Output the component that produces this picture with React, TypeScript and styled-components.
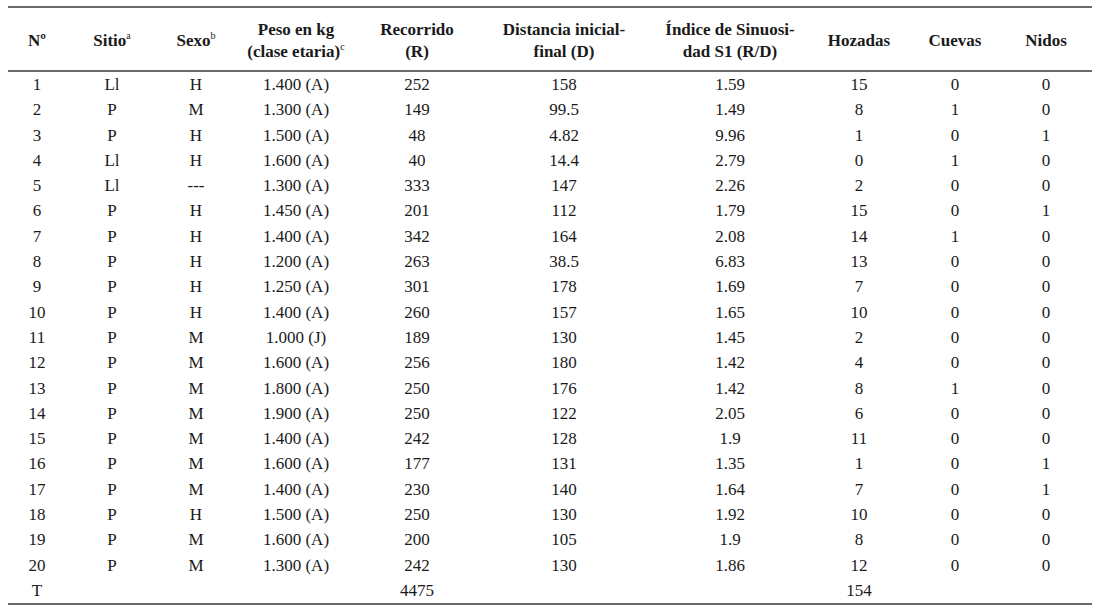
import React from 'react'
import styled, { createGlobalStyle } from 'styled-components'

const GlobalStyle = createGlobalStyle`
  body {
    margin: 0;
    background: #ffffff;
    font-family: "Liberation Serif", "Times New Roman", serif;
    color: #1a1a1a;
  }
`

const widths = [58, 92, 76, 124, 118, 176, 156, 102, 90, 92]

type Row = [string, string, string, string, string, string, string, string, string, string]

const rows: Row[] = [
    ['1', 'Ll', 'H', '1.400 (A)', '252', '158', '1.59', '15', '0', '0'],
    ['2', 'P', 'M', '1.300 (A)', '149', '99.5', '1.49', '8', '1', '0'],
    ['3', 'P', 'H', '1.500 (A)', '48', '4.82', '9.96', '1', '0', '1'],
    ['4', 'Ll', 'H', '1.600 (A)', '40', '14.4', '2.79', '0', '1', '0'],
    ['5', 'Ll', '---', '1.300 (A)', '333', '147', '2.26', '2', '0', '0'],
    ['6', 'P', 'H', '1.450 (A)', '201', '112', '1.79', '15', '0', '1'],
    ['7', 'P', 'H', '1.400 (A)', '342', '164', '2.08', '14', '1', '0'],
    ['8', 'P', 'H', '1.200 (A)', '263', '38.5', '6.83', '13', '0', '0'],
    ['9', 'P', 'H', '1.250 (A)', '301', '178', '1.69', '7', '0', '0'],
    ['10', 'P', 'H', '1.400 (A)', '260', '157', '1.65', '10', '0', '0'],
    ['11', 'P', 'M', '1.000 (J)', '189', '130', '1.45', '2', '0', '0'],
    ['12', 'P', 'M', '1.600 (A)', '256', '180', '1.42', '4', '0', '0'],
    ['13', 'P', 'M', '1.800 (A)', '250', '176', '1.42', '8', '1', '0'],
    ['14', 'P', 'M', '1.900 (A)', '250', '122', '2.05', '6', '0', '0'],
    ['15', 'P', 'M', '1.400 (A)', '242', '128', '1.9', '11', '0', '0'],
    ['16', 'P', 'M', '1.600 (A)', '177', '131', '1.35', '1', '0', '1'],
    ['17', 'P', 'M', '1.400 (A)', '230', '140', '1.64', '7', '0', '1'],
    ['18', 'P', 'H', '1.500 (A)', '250', '130', '1.92', '10', '0', '0'],
    ['19', 'P', 'M', '1.600 (A)', '200', '105', '1.9', '8', '0', '0'],
    ['20', 'P', 'M', '1.300 (A)', '242', '130', '1.86', '12', '0', '0'],
    ['T', '', '', '', '4475', '', '', '154', '', ''],
]

const App = () => {
    return (
        <Page>
            <GlobalStyle />
            <Table>
                <colgroup>
                    {widths.map((w, i) => (
                        <Col key={i} $w={w} />
                    ))}
                </colgroup>
                <thead>
                    <tr>
                        <HeadCell>Nº</HeadCell>
                        <HeadCell>Sitio<Sup>a</Sup></HeadCell>
                        <HeadCell>Sexo<Sup>b</Sup></HeadCell>
                        <HeadCell>Peso en kg<br />(clase etaria)<Sup>c</Sup></HeadCell>
                        <HeadCell>Recorrido<br />(R)</HeadCell>
                        <HeadCell>Distancia inicial-<br />final (D)</HeadCell>
                        <HeadCell>Índice de Sinuosi-<br />dad S1 (R/D)</HeadCell>
                        <HeadCell>Hozadas</HeadCell>
                        <HeadCell>Cuevas</HeadCell>
                        <HeadCell>Nidos</HeadCell>
                    </tr>
                </thead>
                <tbody>
                    {rows.map((r, i) => (
                        <tr key={i}>
                            {r.map((c, j) => (
                                <Cell key={j}>{c}</Cell>
                            ))}
                        </tr>
                    ))}
                </tbody>
            </Table>
        </Page>
    )
}
export default App

const Page = styled.div`
  padding: 6px 9px 0 8px;
`

const Table = styled.table`
  width: 1084px;
  border-collapse: collapse;
  table-layout: fixed;
  font-size: 17px;
  border-top: 2px solid #6a6a6a;
  border-bottom: 2px solid #6a6a6a;

  thead tr {
    border-bottom: 2px solid #6a6a6a;
  }
`

const Col = styled.col<{ $w: number }>`
  width: ${p => p.$w}px;
`

const HeadCell = styled.th`
  height: 59px;
  padding: 3px 0 0;
  font-weight: bold;
  line-height: 22px;
  text-align: center;
  vertical-align: middle;
  white-space: nowrap;
`

const Sup = styled.sup`
  font-size: 10px;
  font-weight: normal;
  vertical-align: 7px;
  line-height: 0;
`

const Cell = styled.td`
  height: 25.3px;
  padding: 0;
  line-height: 25.3px;
  text-align: center;
  white-space: nowrap;
`
